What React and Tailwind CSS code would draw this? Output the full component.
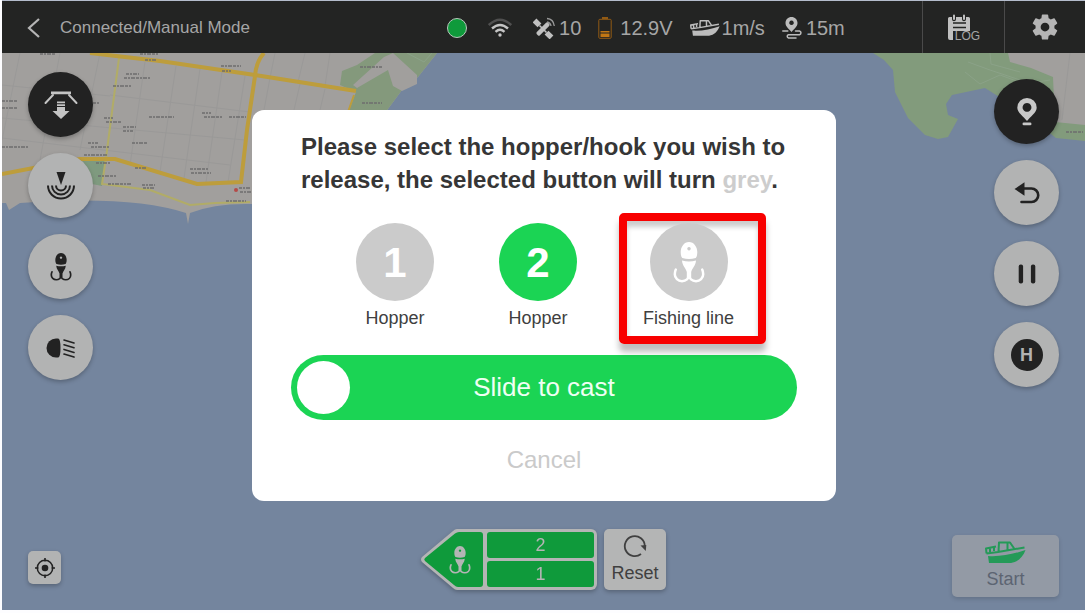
import React, { useState } from 'react';
import { IoSettingsSharp } from 'react-icons/io5';

const HookIcon = ({ className }) => (
  <svg className={className} viewBox="0 0 32 41" fill="currentColor" aria-hidden="true">
    <path
      fillRule="evenodd"
      d="M16 0c5 0 8.300 5 8.300 10 0 3-.6 5-1.600 6q-6.700 2.200-13.400 0c-1-1-1.600-3-1.600-6 0-5 3.300-10 8.300-10zm0 5a1.700 1.700 0 1 0 .01 0z"
    />
    <path d="M9 18.500q7 2 14 0c-.4 5.500-3.800 7.500-4.800 11.500v6h-4.400v-6c-1-4-4.400-6-4.800-11.500z" />
    <path
      d="M16 33c0 3.500-3 6.200-7 6.200s-7.200-3-7.200-7q0-2.700 1-4.700M16 33c0 3.500 3 6.200 7 6.200s7.200-3 7.200-7q0-2.700-1-4.700"
      fill="none"
      stroke="currentColor"
      strokeWidth="2.500"
      strokeLinecap="round"
    />
  </svg>
);

const BoatIcon = ({ className }) => (
  <svg className={className} viewBox="0 0 41 23" aria-hidden="true">
    <path d="M3 15c12 1 26-2 37.500-6C38 16 33 21 26 22H4z" fill="currentColor" />
    <path
      d="M1.500 12.500L1 7.500 11 5.500M5 7v4M9 6v4M1.500 12.500L13 11l26.500-4.500M13.500 10.500L14 1.500h11l4.500 6.500M22.500 2v7"
      fill="none"
      stroke="currentColor"
      strokeWidth="2"
      strokeLinejoin="round"
    />
  </svg>
);

const WifiIcon = () => (
  <svg className="w-6 h-5" viewBox="0 0 24 20" fill="none" stroke="#c4c4c4" strokeWidth="2.400" aria-hidden="true">
    <path d="M.8 7Q12-3.500 23.200 7" stroke="#505050" />
    <path d="M4 10.500q8-7 16 0M7.500 13.800q4.500-4 9 0" />
    <circle cx="12" cy="17" r="1.700" fill="#c4c4c4" stroke="none" />
  </svg>
);

const SatelliteIcon = () => (
  <svg className="w-[22px] h-[22px]" viewBox="0 0 22 22" aria-hidden="true">
    <g transform="rotate(45 10 12)" fill="#c0c0c0">
      <rect x="-2" y="9.300" width="7" height="5.400" />
      <rect x="15" y="9.300" width="7" height="5.400" />
      <rect x="7.800" y="4" width="4.400" height="16" rx="1.500" />
      <path d="M5 11.200h10v1.600H5z" />
    </g>
    <path d="M14 5q3.500.5 4 4M14 1.500q6.500.5 7.300 7.500" fill="none" stroke="#9a9a9a" strokeWidth="1.300" />
  </svg>
);

const BatteryIcon = () => (
  <svg className="w-[14px] h-[22px]" viewBox="0 0 14 22" aria-hidden="true">
    <path d="M4 0h6v2H4z" fill="#925a14" />
    <rect x=".8" y="2.300" width="12.400" height="19" rx="1" fill="none" stroke="#925a14" />
    <path d="M2.500 14h9v1.500h-9zM2.500 16.500h9V20h-9z" fill="#c17614" />
  </svg>
);

const RouteIcon = () => (
  <svg className="w-[22px] h-[22px]" viewBox="0 0 22 22" fill="none" aria-hidden="true">
    <path
      fillRule="evenodd"
      fill="#bcbcbc"
      d="M9.500 0c3.400 0 6 2.600 6 6 0 4-4 6-6 9-2-3-6-5-6-9 0-3.400 2.600-6 6-6zm0 3.500a2.300 2.300 0 1 0 .01 0z"
    />
    <path
      d="M.8 14h5M13.500 14h4a1.900 1.900 0 0 1 0 3.700h-11a1.700 1.700 0 0 0 0 3.300h7.500"
      stroke="#bcbcbc"
      strokeWidth="1.500"
      strokeLinecap="round"
    />
  </svg>
);

const ReleaseIcon = () => (
  <svg className="w-[34px] h-[30px]" viewBox="0 0 34 30" aria-hidden="true">
    <path d="M9 5l-7.500 8M25 5l7.500 8" stroke="#c4c4c4" strokeWidth="2" strokeLinecap="round" />
    <path d="M7 1.500h20v2.800H7zM13 11.500h8v1.700h-8zM13 14.300h8v1.700h-8zM13 17h8v4h4.500L17 29l-8.500-8H13z" fill="#c4c4c4" />
  </svg>
);

const SonarIcon = () => (
  <svg className="w-[30px] h-[30px]" viewBox="0 0 30 30" fill="none" stroke="#222222" strokeWidth="2" aria-hidden="true">
    <path d="M10.500 1h9L15 14z" fill="#222222" stroke="none" />
    <path d="M2 14.500a13 13 0 0 0 26 0M6 14.500a9 9 0 0 0 18 0M10 14.500a5 5 0 0 0 10 0" />
  </svg>
);

const LightIcon = () => (
  <svg className="w-[30px] h-5" viewBox="0 0 30 20" aria-hidden="true">
    <path d="M10 .5h2q2.500 0 2.500 9.500T12 19.500h-2A9.500 9.500 0 0 1 10 .5z" fill="#222222" />
    <path d="M18 2l10 3M18 6.700l10 3M18 11.400l10 3M18 16.100l10 3" stroke="#222222" strokeWidth="1.600" strokeLinecap="round" />
  </svg>
);

const PinIcon = () => (
  <svg className="w-5 h-7" viewBox="0 0 20 28" fill="#c8c8c8" aria-hidden="true">
    <path fillRule="evenodd" d="M10 0a9.700 9.700 0 0 1 9.700 9.700c0 4.800-6.500 8.800-9.700 13.300C6.800 18.500.3 14.500.3 9.700A9.700 9.700 0 0 1 10 0zm0 5a4.400 4.400 0 1 0 .01 0z" />
    <rect x="5.500" y="24.500" width="9" height="2.800" rx="1.400" />
  </svg>
);

const BackIcon = () => (
  <svg className="w-[26px] h-[22px]" viewBox="0 0 26 22" aria-hidden="true">
    <path d="M.5 7L10.500.3v13.400z" fill="#222222" />
    <path d="M9 6.500h8.500a6.500 6.500 0 0 1 0 13.500H7.500" fill="none" stroke="#222222" strokeWidth="2.600" strokeLinecap="round" />
  </svg>
);

const PauseIcon = () => (
  <svg className="w-[18px] h-5" viewBox="0 0 18 20" fill="#222222" aria-hidden="true">
    <rect x=".7" y=".5" width="4.400" height="19" rx="2" />
    <rect x="12.900" y=".5" width="4.400" height="19" rx="2" />
  </svg>
);

const LogIcon = () => (
  <svg className="w-6 h-[27px] shrink-0" viewBox="0 0 24 27" aria-hidden="true">
    <path d="M2.500 3H21.500a1.500 1.500 0 0 1 1.500 1.500V17H6v9H3a2 2 0 0 1-2-2V4.500A1.500 1.500 0 0 1 2.500 3z" fill="#c0c0c0" />
    <path d="M6 9h13M6 13.500h13" stroke="#232423" strokeWidth="1.500" />
    <path d="M7 1.800v3.500M17 1.800v3.500" stroke="#232423" strokeWidth="4" strokeLinecap="round" />
    <path d="M7 1.500v3.500M17 1.500v3.500" stroke="#c0c0c0" strokeWidth="2" strokeLinecap="round" />
  </svg>
);

const ResetIcon = () => (
  <svg className="w-6 h-6" viewBox="0 0 24 24" fill="none" aria-hidden="true">
    <path d="M18 20A10 10 0 1 1 21.800 12" stroke="#404040" strokeWidth="1.800" />
    <path d="M17.500 11.500l5.800-.5-.5 6z" fill="#404040" />
  </svg>
);

const TargetIcon = () => (
  <svg className="w-5 h-5" viewBox="0 0 20 20" aria-hidden="true">
    <circle cx="10" cy="10" r="7.700" fill="none" stroke="#222222" strokeWidth="1.500" />
    <circle cx="10" cy="10" r="3.300" fill="#222222" />
    <path d="M10 0v3.500M10 16.500V20M0 10h3.500M16.500 10H20" stroke="#222222" strokeWidth="1.600" />
  </svg>
);

// [x, y, length] of the tiny street and place names
const mapLabels = [
  [40, 54, 15], [140, 54, 18], [126, 74, 13], [124, 78, 26], [113, 86, 19], [2, 101, 16], [2, 108, 16],
  [93, 103, 6], [104, 118, 9], [106, 122, 15], [123, 127, 13], [123, 131, 10], [149, 117, 25], [202, 113, 9],
  [204, 117, 18], [229, 117, 17], [132, 143, 16], [88, 143, 10], [91, 147, 19], [2, 147, 26], [84, 155, 24],
  [96, 163, 14], [135, 168, 12], [190, 169, 19], [191, 173, 20], [98, 176, 18], [108, 184, 24], [142, 185, 13],
  [143, 188, 11], [239, 188, 12], [240, 192, 11], [226, 201, 20], [221, 66, 20], [222, 71, 9], [360, 67, 22],
  [362, 103, 20], [1066, 132, 17], [145, 60, 11],
];

const Map = () => (
  <svg className="absolute inset-0 w-full h-full" viewBox="2 53 1083 557" preserveAspectRatio="xMinYMin slice" aria-hidden="true">
    <path d="M2 53H437L418 77 402 90 385 113 252 204Q215 203 190 213L188 224 186 213Q130 195 20 203L9 210 6 203H2z" fill="#a19f9d" />
    <path d="M375 53H437L418 77 402 90 385 113H348L356 92 340 85 342 71 357 65z" fill="#84997c" />
    <path d="M384 57L393 53 417 75 417 84 402 91 393 86 388 70 357 88 353 85z" fill="#a19f9d" />
    <path d="M873 53H1085V141L1056 138 1020 110 985 88 952 95 946 104 948 115 958 119 948 137 938 139 925 135 908 118 895 92 893 70 884 60z" fill="#829b7c" />
    <path d="M1008 53H1085V125L1055 122 1053 77 1031 68 1010 62z" fill="#a19f9d" />
    <path d="M82 160H105L102 186 92 184z" fill="#7f9a7f" />
    <path
      d="M20 53L2 140M60 53L40 160M100 53L80 150M145 62L130 165M176 66L160 172M200 69L184 178M222 72L206 182M245 76L228 182M2 85L110 96M2 118L245 140M2 138L230 165M110 95L250 112M275 53L270 78M305 53L298 82M330 53L325 86M270 78L264 110M300 84L294 110M325 89L320 110M1070 53L1062 120"
      fill="none"
      stroke="#9a9998"
      strokeWidth="1"
    />
    <path d="M965 72L980 84 1000 75 1025 84 1050 80M968 62L990 70 1020 80M990 53L991 64 1020 72M407 53L424 62 432 53" fill="none" stroke="#8ba288" strokeWidth="1" />
    <path d="M119 58L106 158 102 184 150 190 190 205 215 203 250 202" fill="none" stroke="#b1ac67" strokeWidth="2" />
    <path d="M90 53L160 61 255 75 356 91" fill="none" stroke="#bd9d3c" strokeWidth="4" />
    <path d="M354 95L348 112" fill="none" stroke="#bd9d3c" strokeWidth="2" />
    <path d="M264 53Q256 62 255 76L247 130 241 182 197 184 115 159H80L2 174" fill="none" stroke="#bd9d3c" strokeWidth="4" />
    {mapLabels.map(([x, y, length]) => (
      <path key={`${x}-${y}`} d={`M${x} ${y}h${length}`} stroke="#6e6e6e" strokeWidth="1.500" strokeDasharray="3 1 2 1 4 1" />
    ))}
    <circle cx="236" cy="190" r="2" fill="#b44b48" />
  </svg>
);

const RoundButton = ({ label, dark, children }) => (
  <button
    aria-label={label}
    className={`flex h-[65px] w-[65px] items-center justify-center rounded-full shadow-[0_2px_4px_rgba(0,0,0,0.25)] ${dark ? 'bg-[#222222]' : 'bg-[#b2b3b3]'}`}
  >
    {children}
  </button>
);

const Choice = ({ label, selected, highlighted, onClick, children }) => (
  <button
    onClick={onClick}
    aria-pressed={selected}
    className={`flex flex-col items-center border-8 pt-[2px] pb-[6px] ${
      highlighted
        ? 'w-[147px] rounded-[5px] border-[#f80000] pr-2 shadow-[0_8px_6px_rgba(0,0,0,0.25),inset_0_6px_5px_rgba(0,0,0,0.2)]'
        : 'w-[124px] border-transparent'
    }`}
  >
    <span
      className={`flex h-[78px] w-[78px] items-center justify-center rounded-full text-[42px] font-bold text-white ${
        selected ? 'bg-[#cbcbcb]' : 'bg-[#1bd454]'
      }`}
    >
      {children}
    </span>
    <span className="mt-[5px] text-lg leading-6 text-[#404040]">{label}</span>
  </button>
);

const App = () => {
  const [selected, setSelected] = useState({ one: true, two: false, line: true });
  const [cast, setCast] = useState(0);

  const toggle = (name) => setSelected({ ...selected, [name]: !selected[name] });

  return (
    <div className="min-h-screen bg-[#fdfdff] pt-px pb-[3px] pl-[2px] flex flex-col font-['Liberation_Sans',Arial,sans-serif]">
      <div className="relative flex flex-1 flex-col">
        <header className="flex h-[52px] items-stretch bg-[#232423] text-[#a6a6a6] shadow-[0_-1px_0_#b4bccc]">
          <div className="flex w-[41%] shrink-0 items-center gap-[18px] pt-[2px] pl-6">
            <button aria-label="Back">
              <svg className="w-4 h-5" viewBox="0 0 16 20" fill="none" aria-hidden="true">
                <path d="M13 1L3 10l10 9" stroke="#b5b5b5" strokeWidth="2.200" />
              </svg>
            </button>
            <h1 className="text-[17px]">Connected/Manual Mode</h1>
          </div>

          <div className="flex items-center gap-[17px] pt-[2px] pl-px text-xl whitespace-nowrap">
            <span className="mr-1 h-5 w-5 rounded-full border border-[#b9c7bd] bg-[#0f9a3b]"></span>
            <span className="mr-1"><WifiIcon /></span>
            <span className="flex items-center gap-1"><SatelliteIcon />10</span>
            <span className="flex items-center gap-2"><BatteryIcon />12.9V</span>
            <span className="flex items-center gap-[2px]"><BoatIcon className="w-[30px] h-[18px] text-[#bcbcbc]" />1m/s</span>
            <span className="flex items-center gap-[2px]"><RouteIcon />15m</span>
          </div>

          <div className="ml-auto flex">
            <button className="flex w-[82px] items-center justify-center border-l border-[#4a4a4a]">
              <LogIcon />
              <span className="-ml-4 self-end pb-[9px] text-xs">LOG</span>
            </button>
            <button aria-label="Settings" className="flex w-[81px] items-center justify-center border-l border-[#4a4a4a]">
              <IoSettingsSharp className="h-7 w-7 text-[#b5b5b5]" />
            </button>
          </div>
        </header>

        <main className="relative flex flex-1 overflow-hidden bg-[#74859e] px-[26px]">
          <Map />

          <div className="relative flex flex-1 flex-col items-start justify-between pt-[19px] pb-[26px]">
            <div className="flex flex-col gap-4">
              <RoundButton label="Release" dark><ReleaseIcon /></RoundButton>
              <RoundButton label="Sonar"><SonarIcon /></RoundButton>
              <RoundButton label="Hook"><HookIcon className="w-[22px] h-7 text-[#222222]" /></RoundButton>
              <RoundButton label="Lights"><LightIcon /></RoundButton>
            </div>
            <button aria-label="Locate" className="flex h-[33px] w-[33px] items-center justify-center rounded-[5px] bg-[#b2b3b3] shadow-[0_2px_4px_rgba(0,0,0,0.25)]">
              <TargetIcon />
            </button>
          </div>

          <div className="relative flex items-end gap-[7px] pb-5">
            <div className="flex h-[61px] drop-shadow-[0_2px_2px_rgba(0,0,0,0.25)]">
              <button aria-label="Fishing line" className="grid items-center">
                <svg className="h-[61px] w-[66px] [grid-area:1/1]" viewBox="0 0 66 61" aria-hidden="true">
                  <path d="M36 0h30v61H36q-2 0-4-2L1 33q-2-2.500 0-5L32 2q2-2 4-2z" fill="#b4b5b5" />
                  <path d="M38 3h21q3 0 3 3v49q0 3-3 3H37q-2 0-4-2L4 32q-1.500-1.500 0-3L34 4.500Q36 3 38 3z" fill="#0f9a3b" />
                </svg>
                <HookIcon className="ml-7 h-7 w-[22px] text-[#b4b5b5] [grid-area:1/1]" />
              </button>
              <div className="flex w-[110px] flex-col gap-[3px] rounded-r-md bg-[#b4b5b5] py-[3px] pr-[3px] text-lg text-[#b4b5b5]">
                <button className="flex-1 rounded-[3px] bg-[#0f9a3b] leading-6">2</button>
                <button className="flex-1 rounded-[3px] bg-[#0f9a3b] leading-6">1</button>
              </div>
            </div>
            <button className="flex h-[61px] w-[62px] flex-col items-center justify-center gap-[3px] rounded-[5px] bg-[#b4b5b5] text-lg leading-6 text-[#404040] shadow-[0_2px_4px_rgba(0,0,0,0.25)]">
              <ResetIcon />
              Reset
            </button>
          </div>

          <div className="relative flex flex-1 flex-col items-end justify-between pt-[26px] pb-[13px]">
            <div className="flex flex-col gap-4">
              <RoundButton label="Waypoint" dark><PinIcon /></RoundButton>
              <RoundButton label="Return"><BackIcon /></RoundButton>
              <RoundButton label="Pause"><PauseIcon /></RoundButton>
              <RoundButton label="Home">
                <span className="flex h-8 w-8 items-center justify-center rounded-full bg-[#222222] text-lg font-bold text-[#b2b3b3]">H</span>
              </RoundButton>
            </div>
            <button className="flex h-[62px] w-[107px] flex-col items-center justify-center gap-[3px] rounded-[5px] bg-[#939aa5] text-lg leading-6 text-[#5c6472] shadow-[0_2px_4px_rgba(0,0,0,0.15)]">
              <BoatIcon className="w-[41px] h-[23px] text-[#249a58]" />
              Start
            </button>
          </div>
        </main>

        {/* release dialog */}
        <div className="absolute inset-0 flex items-center justify-center pl-px">
          <div role="dialog" aria-labelledby="release-title" className="w-[584px] rounded-xl bg-white px-[39px] pt-5 pb-[23px]">
            <h2 id="release-title" className="px-[10px] text-2xl leading-[33px] font-bold text-[#363636]">
              Please select the hopper/hook you wish to release, the selected button will turn{' '}
              <span className="text-[#cdcdcd]">grey</span>.
            </h2>

            <div className="mt-[17px] flex justify-end gap-[19px] pr-[31px]">
              <Choice label="Hopper" selected={selected.one} onClick={() => toggle('one')}>1</Choice>
              <Choice label="Hopper" selected={selected.two} onClick={() => toggle('two')}>2</Choice>
              <Choice label="Fishing line" selected={selected.line} highlighted onClick={() => toggle('line')}>
                <HookIcon className="h-[41px] w-8" />
              </Choice>
            </div>

            <div className="mt-[11px] grid h-[65px] items-center rounded-full bg-[#1bd454]">
              <label htmlFor="cast" className="text-center text-[26px] text-[#effff3] [grid-area:1/1]">Slide to cast</label>
              <input
                id="cast"
                type="range"
                value={cast}
                onChange={(e) => setCast(e.target.value)}
                className="h-full w-full cursor-pointer appearance-none bg-transparent px-[6px] [grid-area:1/1] [&::-webkit-slider-thumb]:h-[53px] [&::-webkit-slider-thumb]:w-[53px] [&::-webkit-slider-thumb]:appearance-none [&::-webkit-slider-thumb]:rounded-full [&::-webkit-slider-thumb]:bg-white"
              />
            </div>

            <button className="mx-auto mt-[22px] block text-2xl leading-9 text-[#cacaca]">Cancel</button>
          </div>
        </div>
      </div>
    </div>
  );
};

export default App;
